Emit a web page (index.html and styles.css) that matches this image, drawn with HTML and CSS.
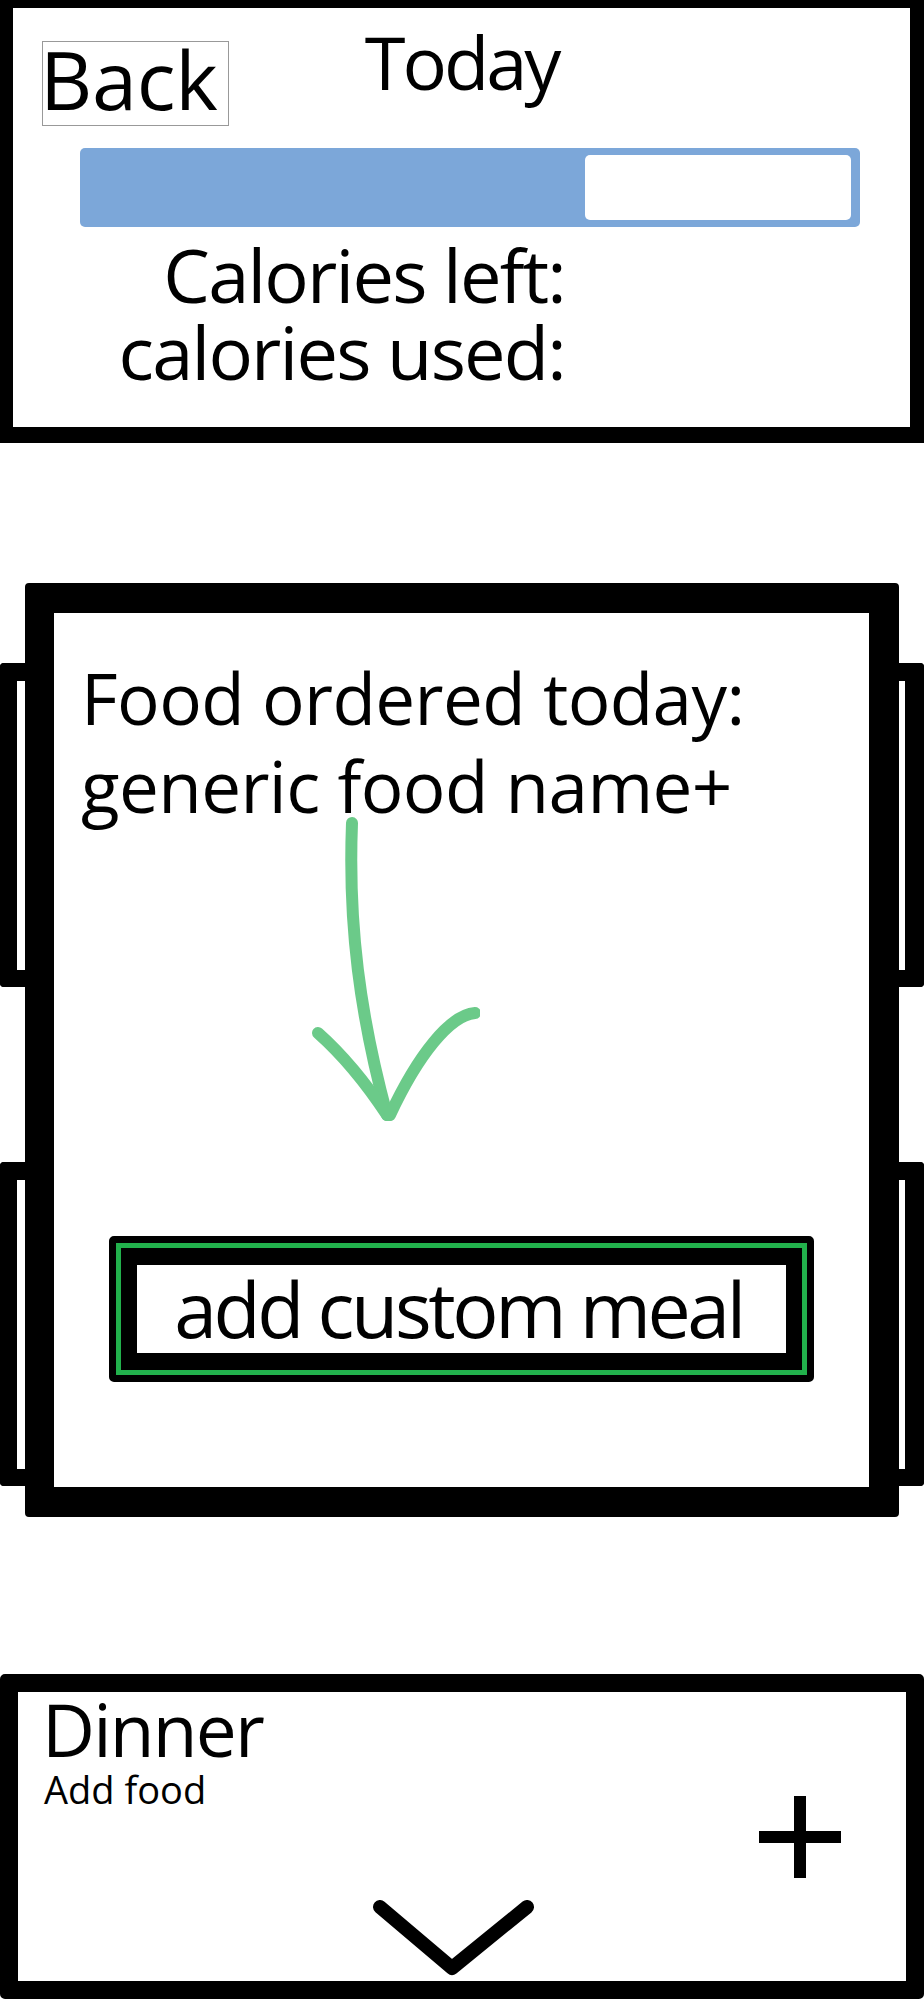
FILE: index.html
```html
<!DOCTYPE html>
<html lang="en">

<head>
    <meta charset="UTF-8">
    <meta name="viewport" content="width=device-width, initial-scale=1.0">
    <title>Today</title>
    <link rel="stylesheet" href="styles.css">
</head>

<body>
    <!-- 顶部: 返回 + 今日卡路里 -->
    <div class="today">
        <div class="head">
            <a href="javascript:void(0)" class="back">Back</a>
            <h1 class="title">Today</h1>
        </div>
        <div class="bar">
            <div class="bar-left"></div>
        </div>
        <p class="calories">Calories left:<br>calories used:</p>
    </div>

    <!-- 中间: 今日已点食物 -->
    <div class="order">
        <div class="rail rail-left">
            <div class="tab"></div>
            <div class="tab"></div>
        </div>
        <div class="frame">
            <p class="food">Food ordered today:<br>generic food name+</p>
            <svg class="arrow" width="170" height="310" viewBox="0 0 170 310">
                <path d="M42 8 C38 110 50 200 77 300" />
                <path d="M8 218 Q44 250 77 300" />
                <path d="M165 198 C140 200 108 240 80 300" />
            </svg>
            <a href="javascript:void(0)" class="custom">
                <span class="ring">
                    <span class="custom-text">add custom meal</span>
                </span>
            </a>
        </div>
        <div class="rail rail-right">
            <div class="tab"></div>
            <div class="tab"></div>
        </div>
    </div>

    <!-- 底部: 晚餐 -->
    <div class="meal">
        <div class="meal-head">
            <div class="meal-text">
                <h2>Dinner</h2>
                <p>Add food</p>
            </div>
            <svg class="plus" width="82" height="82" viewBox="0 0 82 82">
                <rect x="35" y="0" width="12" height="82" />
                <rect x="0" y="35" width="82" height="12" />
            </svg>
        </div>
        <svg class="chevron" width="161" height="76" viewBox="0 0 161 76">
            <path d="M7 7 L79 68 L154 7" />
        </svg>
    </div>
</body>

</html>
```

FILE: styles.css
```css
* {
    padding: 0;
    margin: 0;
    box-sizing: border-box;
}

body {
    width: 924px;
    background-color: white;
    font-family: "Open Sans", "Noto Sans", sans-serif;
    color: #000;
}

a {
    color: #000;
    text-decoration: none;
}

/* 顶部 */
.today {
    height: 443px;
    border-style: solid;
    border-color: #000;
    border-width: 8px 14px 16px 13px;
}

.head {
    display: grid;
    grid-template-columns: 1fr auto 1fr;
    align-items: start;
}

.back {
    justify-self: start;
    width: 187px;
    height: 85px;
    margin: 33px 0 0 29px;
    padding: 0 0 10px 0;
    border: 1px solid #999;
    font-size: 81px;
    line-height: 73px;
    letter-spacing: -0.3px;
    text-indent: -3px;
}

.title {
    margin-top: 17px;
    font-size: 74px;
    font-weight: normal;
    line-height: 74px;
    letter-spacing: -3px;
}

.bar {
    display: flex;
    justify-content: flex-end;
    height: 79px;
    margin: 22px 50px 0 67px;
    padding: 7px 9px 7px 0;
    border-radius: 5px;
    background-color: #7ca7d9;
}

.bar-left {
    width: 266px;
    border-radius: 5px;
    background-color: white;
}

.calories {
    width: 552px;
    margin-top: 9px;
    font-size: 74px;
    line-height: 77px;
    letter-spacing: -1.8px;
    text-align: right;
}

/* 中间 */
.order {
    display: flex;
    margin-top: 140px;
}

.rail {
    width: 25px;
    padding-top: 80px;
}

.tab {
    height: 324px;
    background-color: white;
    border: 0 solid #000;
    border-width: 18px 0 17px 17px;
    border-radius: 4px 0 0 4px;
}

.tab + .tab {
    margin-top: 175px;
}

.rail-right .tab {
    border-width: 18px 19px 17px 0;
    border-radius: 0 4px 4px 0;
}

.frame {
    width: 874px;
    height: 934px;
    border: 30px solid #000;
    border-width: 30px 30px 30px 29px;
    border-radius: 4px;
}

.food {
    padding: 41px 0 0 27px;
    font-size: 71px;
    line-height: 88px;
    letter-spacing: -0.6px;
}

.arrow {
    display: block;
    margin: -15px 0 0 256px;
    fill: none;
    stroke: #5cc57d;
    stroke-width: 12px;
    stroke-linecap: round;
    opacity: 0.9;
}

.custom {
    display: block;
    width: 705px;
    height: 146px;
    margin: 111px 0 0 55px;
    border: 7px solid #000;
    border-radius: 5px;
    background-color: #000;
}

.ring {
    display: block;
    height: 100%;
    border: 5px solid #22b14c;
}

.custom-text {
    display: block;
    height: 100%;
    padding-right: 6px;
    border: 0 solid #000;
    border-width: 17px 16px;
    background-color: white;
    font-size: 77px;
    line-height: 88px;
    letter-spacing: -3.4px;
    text-align: center;
}

/* 底部 */
.meal {
    height: 325px;
    margin-top: 157px;
    border: 18px solid #000;
    border-radius: 5px;
}

.meal-head {
    display: flex;
}

.meal-text h2 {
    padding-left: 24px;
    font-size: 73px;
    font-weight: normal;
    line-height: 73px;
    letter-spacing: -1.8px;
}

.meal-text p {
    margin-top: 5px;
    padding-left: 26px;
    font-size: 38px;
    line-height: 38px;
}

.plus {
    margin: 104px 65px 0 auto;
    fill: #000;
}

.chevron {
    display: block;
    margin: 22px 0 0 355px;
    fill: none;
    stroke: #000;
    stroke-width: 14px;
    stroke-linecap: round;
    stroke-linejoin: round;
}
```
